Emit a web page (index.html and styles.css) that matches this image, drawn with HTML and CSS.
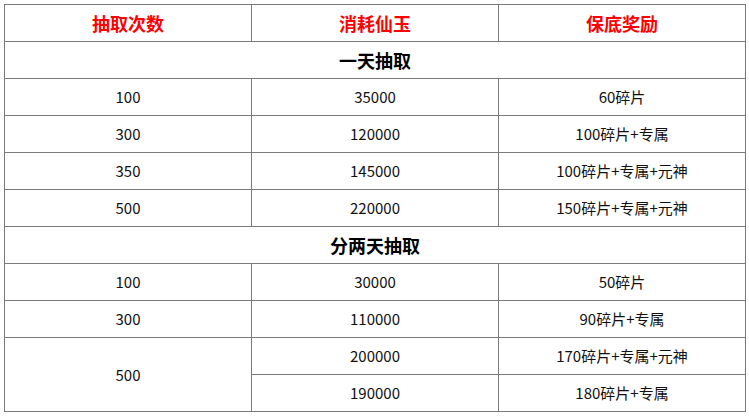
FILE: index.html
```html
<!DOCTYPE html>
<html lang="zh">
<head>
<meta charset="utf-8">
<link rel="stylesheet" href="styles.css">
</head>
<body>
<table class="tbl">
  <tr class="head">
    <th>抽取次数</th><th>消耗仙玉</th><th>保底奖励</th>
  </tr>
  <tr class="section"><td colspan="3">一天抽取</td></tr>
  <tr><td>100</td><td>35000</td><td>60碎片</td></tr>
  <tr><td>300</td><td>120000</td><td>100碎片+专属</td></tr>
  <tr><td>350</td><td>145000</td><td>100碎片+专属+元神</td></tr>
  <tr><td>500</td><td>220000</td><td>150碎片+专属+元神</td></tr>
  <tr class="section"><td colspan="3">分两天抽取</td></tr>
  <tr><td>100</td><td>30000</td><td>50碎片</td></tr>
  <tr><td>300</td><td>110000</td><td>90碎片+专属</td></tr>
  <tr><td rowspan="2">500</td><td>200000</td><td>170碎片+专属+元神</td></tr>
  <tr><td>190000</td><td>180碎片+专属</td></tr>
</table>
</body>
</html>
```
FILE: styles.css
```css
html, body {
  margin: 0;
  padding: 0;
  background: #fff;
}
body {
  padding: 4px 0 0 4px;
  font-family: "Noto Sans CJK SC", "Noto Sans", sans-serif;
  color: #111;
}
.tbl {
  border-collapse: collapse;
  width: 742px;
  table-layout: fixed;
}
.tbl th, .tbl td {
  border: 1px solid #7a7a7a;
  height: 36px;
  padding: 0;
  text-align: center;
  vertical-align: middle;
  font-size: 15px;
  line-height: 20px;
}
.head th {
  color: #f00;
  font-size: 18px;
  font-weight: bold;
}
.section td {
  font-size: 18px;
  font-weight: bold;
  color: #000;
}
```
